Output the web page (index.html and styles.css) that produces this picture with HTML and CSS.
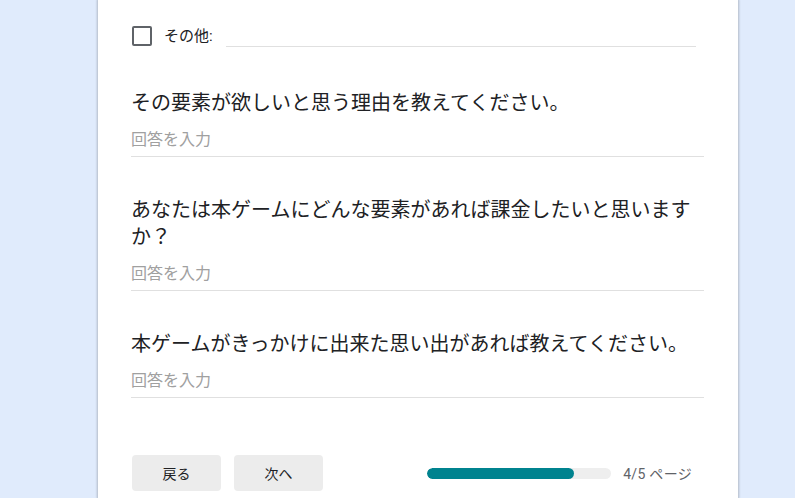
FILE: index.html
```html
<!DOCTYPE html>
<html lang="ja">
<head>
<meta charset="utf-8">
<title>フォーム</title>
<link rel="stylesheet" href="styles.css">
</head>
<body>
<div class="card">
  <div class="other-row">
    <div class="checkbox"></div>
    <span class="other-label">その他:</span>
    <div class="other-input"></div>
  </div>

  <div class="question first">
    <div class="q-title">その要素が欲しいと思う理由を教えてください。</div>
    <div class="answer">回答を入力</div>
  </div>

  <div class="question">
    <div class="q-title">あなたは本ゲームにどんな要素があれば課金したいと思いますか？</div>
    <div class="answer">回答を入力</div>
  </div>

  <div class="question">
    <div class="q-title">本ゲームがきっかけに出来た思い出があれば教えてください。</div>
    <div class="answer">回答を入力</div>
  </div>

  <div class="nav">
    <button class="btn">戻る</button>
    <button class="btn">次へ</button>
    <div class="progress">
      <div class="track"><div class="fill" style="width:80%"></div></div>
      <span class="page">4/5 ページ</span>
    </div>
  </div>
</div>
</body>
</html>
```

FILE: styles.css
```css
html, body {
  margin: 0;
  padding: 0;
  height: 100%;
  overflow: hidden;
}
body {
  background: #e0ebfc;
  font-family: Roboto, "Noto Sans CJK JP", sans-serif;
  color: #202124;
}
.card {
  margin-left: 98px;
  width: 640px;
  height: 100%;
  box-sizing: border-box;
  background: #fff;
  padding: 26px 34px 0 33px;
  box-shadow: 0 0 2px 1px rgba(60, 64, 67, 0.28);
}
.other-row {
  display: flex;
  align-items: flex-start;
}
.checkbox {
  width: 20px;
  height: 20px;
  box-sizing: border-box;
  border: 2px solid #5f6368;
  border-radius: 2px;
  margin-left: 1px;
}
.other-label {
  margin-left: 12px;
  font-size: 15px;
  line-height: 20px;
  color: #202124;
}
.other-input {
  flex: 1;
  height: 20px;
  margin-left: 13px;
  margin-right: 8px;
  border-bottom: 1px solid #e0e0e0;
}
.question {
  margin-top: 40px;
}
.question.first {
  margin-top: 43px;
}
.q-title {
  font-size: 20px;
  line-height: 27px;
  color: #202124;
  margin-bottom: 11px;
}
.answer {
  font-size: 16px;
  line-height: 24px;
  color: #a0a0a0;
  padding-bottom: 4px;
  border-bottom: 1px solid #e0e0e0;
}
.nav {
  display: flex;
  align-items: center;
  margin-top: 57px;
}
.btn {
  width: 89px;
  height: 36px;
  border: none;
  border-radius: 4px;
  background: #ececec;
  font-family: Roboto, "Noto Sans CJK JP", sans-serif;
  font-size: 14px;
  color: #202124;
  margin-left: 1px;
  margin-right: 12px;
  padding: 0;
}
.progress {
  display: flex;
  align-items: center;
  margin-left: auto;
  margin-right: 12px;
}
.track {
  width: 184px;
  height: 11px;
  border-radius: 6px;
  background: #eeeeee;
  overflow: hidden;
}
.fill {
  height: 100%;
  background: #00838f;
  border-radius: 6px;
}
.page {
  margin-left: 12px;
  font-size: 14px;
  letter-spacing: 0.3px;
  color: #5f6368;
}
```
